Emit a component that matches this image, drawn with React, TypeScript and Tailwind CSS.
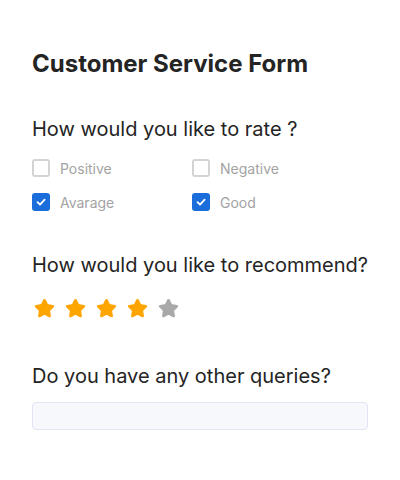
import { Star } from "lucide-react";

const options = [
  { label: "Positive", checked: false },
  { label: "Negative", checked: false },
  { label: "Avarage", checked: true },
  { label: "Good", checked: true },
];

function Box({ checked }: { checked: boolean }) {
  if (checked) {
    return (
      <span className="flex h-[18px] w-[18px] items-center justify-center rounded-[3px] bg-[#1a6ddb]">
        <svg width="12" height="12" viewBox="0 0 12 12" fill="none">
          <path d="M2.5 6.2 5 8.6 9.6 3.6" stroke="#fff" strokeWidth="1.8" strokeLinecap="round" strokeLinejoin="round" />
        </svg>
      </span>
    );
  }
  return <span className="h-[18px] w-[18px] rounded-[3px] border-2 border-[#d4d4d4] bg-white" />;
}

export default function App() {
  return (
    <div className="min-h-[480px] w-[400px] bg-white px-8 pt-[50px] font-['Inter',sans-serif] text-[#242424]">
      <h1 className="text-[24px] font-bold leading-[28px]">Customer Service Form</h1>

      <p className="mt-[39px] text-[20px] leading-6">How would you like to rate ?</p>
      <div className="mt-[18px] grid w-[300px] grid-cols-[160px_1fr] gap-y-4">
        {options.map((o) => (
          <label key={o.label} className="flex h-[18px] items-center gap-[10px]">
            <Box checked={o.checked} />
            <span className="text-[14px] text-[#a3a3a3]">{o.label}</span>
          </label>
        ))}
      </div>

      <p className="mt-[42px] whitespace-nowrap text-[20px] leading-6">How would you like to recommend?</p>
      <div className="mt-[21px] flex gap-[10px] pl-[2px]">
        {[0, 1, 2, 3, 4].map((i) => (
          <Star
            key={i}
            size={21}
            strokeWidth={2}
            fill={i < 4 ? "#ffa500" : "#a9a9a9"}
            color={i < 4 ? "#ffa500" : "#a9a9a9"}
          />
        ))}
      </div>

      <p className="mt-[45px] text-[20px] leading-6">Do you have any other queries?</p>
      <input className="mt-[14px] block h-7 w-[336px] rounded border border-[#e2e5f5] bg-[#f7f8fb] px-2 text-sm outline-none" />
    </div>
  );
}
